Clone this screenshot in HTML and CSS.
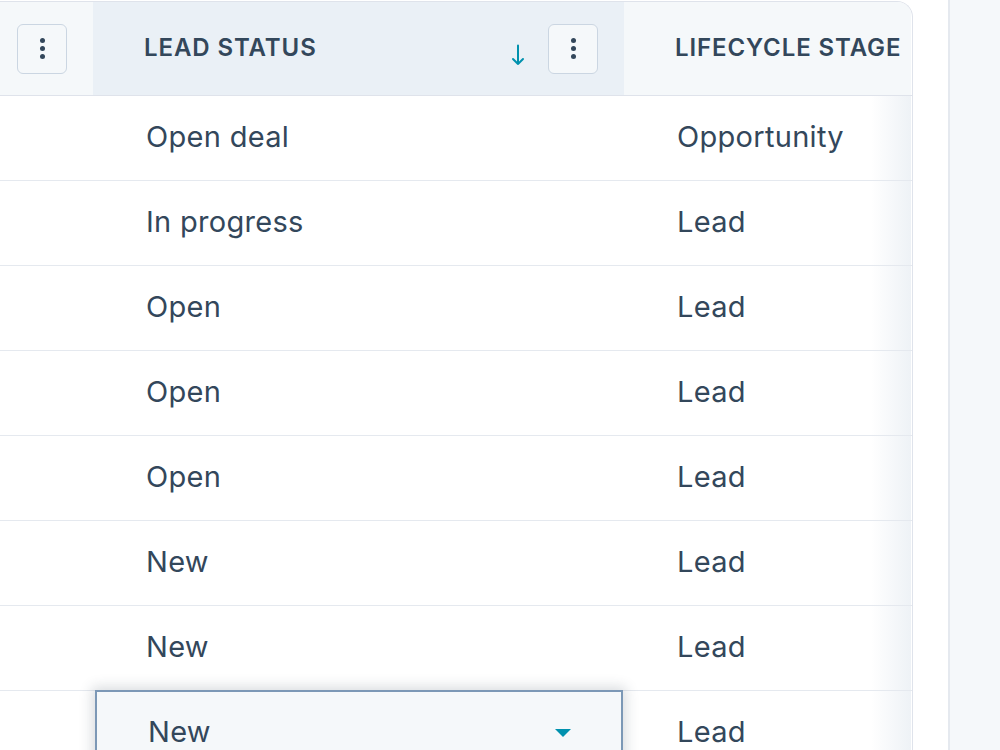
FILE: index.html
```html
<!DOCTYPE html>
<html lang="en">
<head>
    <meta charset="UTF-8">
    <title>Contacts</title>
    <link rel="stylesheet" href="styles.css">
</head>
<body>
    <div class="page">
        <div class="table">
            <div class="row head">
                <div class="cell col-a">
                    <button class="menu-btn"><span></span><span></span><span></span></button>
                </div>
                <div class="cell col-b sorted">
                    <span class="title">LEAD STATUS</span>
                    <svg class="sort" width="14" height="22" viewBox="0 0 14 22">
                        <path d="M7 1.5 V20 M2 15 L7 20 L12 15" fill="none" stroke="#0091ae" stroke-width="2" stroke-linecap="round" stroke-linejoin="round"/>
                    </svg>
                    <button class="menu-btn"><span></span><span></span><span></span></button>
                </div>
                <div class="cell col-c">
                    <span class="title">LIFECYCLE STAGE</span>
                </div>
            </div>
            <div class="row">
                <div class="cell col-a"></div>
                <div class="cell col-b">Open deal</div>
                <div class="cell col-c">Opportunity</div>
            </div>
            <div class="row">
                <div class="cell col-a"></div>
                <div class="cell col-b">In progress</div>
                <div class="cell col-c">Lead</div>
            </div>
            <div class="row">
                <div class="cell col-a"></div>
                <div class="cell col-b">Open</div>
                <div class="cell col-c">Lead</div>
            </div>
            <div class="row">
                <div class="cell col-a"></div>
                <div class="cell col-b">Open</div>
                <div class="cell col-c">Lead</div>
            </div>
            <div class="row">
                <div class="cell col-a"></div>
                <div class="cell col-b">Open</div>
                <div class="cell col-c">Lead</div>
            </div>
            <div class="row">
                <div class="cell col-a"></div>
                <div class="cell col-b">New</div>
                <div class="cell col-c">Lead</div>
            </div>
            <div class="row">
                <div class="cell col-a"></div>
                <div class="cell col-b">New</div>
                <div class="cell col-c">Lead</div>
            </div>
            <div class="row">
                <div class="cell col-a"></div>
                <div class="cell col-b editing">
                    <span>New</span>
                    <span class="caret"></span>
                </div>
                <div class="cell col-c">Lead</div>
            </div>
        </div>
        <div class="side-panel"></div>
    </div>
</body>
</html>
```

FILE: styles.css
```css
body {
    margin: 0;
    font-family: Inter, "Open Sans", sans-serif;
    color: #33475b;
    background: #fff;
    overflow: hidden;
}
.page {
    display: flex;
    height: 750px;
    padding-top: 1px;
    box-sizing: border-box;
}
.table {
    width: 913px;
    border-top: 1px solid #dfe3eb;
    border-right: 1px solid #dfe3eb;
    border-top-right-radius: 16px;
    box-sizing: border-box;
    overflow: hidden;
    flex-shrink: 0;
}
.row {
    display: flex;
    height: 85px;
    border-bottom: 1px solid #e5e9ef;
    box-sizing: border-box;
}
.row.head {
    height: 94px;
    border-bottom: 1px solid #dfe3eb;
}
.cell {
    display: flex;
    align-items: center;
    box-sizing: border-box;
    font-size: 29px;
    letter-spacing: 0.3px;
    padding-left: 53px;
    padding-bottom: 3px;
}
.col-a {
    width: 93px;
    justify-content: flex-end;
    padding: 0 26px 0 0;
}
.col-b {
    width: 531px;
}
.col-c {
    width: 287px;
    background: linear-gradient(to right, #fff 86%, #eef2f6);
}
.head .cell {
    background: #f5f8fa;
    padding-bottom: 0;
}
.head .col-b,
.head .col-c {
    padding-left: 51px;
}
.head .sorted {
    background: #eaf0f6;
    padding-right: 26px;
}
.title {
    font-size: 24px;
    font-weight: 600;
    letter-spacing: 0.9px;
    padding-bottom: 3px;
}
.sort {
    margin-left: auto;
    margin-right: 23px;
    margin-top: 13px;
}
.menu-btn {
    width: 50px;
    height: 50px;
    border: 1px solid #cbd6e2;
    border-radius: 6px;
    background: #f5f8fa;
    display: flex;
    flex-direction: column;
    align-items: center;
    justify-content: center;
    gap: 3px;
    padding: 0;
}
.menu-btn span {
    width: 5px;
    height: 5px;
    border-radius: 50%;
    background: #33475b;
}
.editing {
    position: relative;
    z-index: 1;
    margin: -1px 1px 0 2px;
    width: 528px;
    height: 86px;
    padding-left: 51px;
    padding-right: 50px;
    padding-bottom: 4px;
    justify-content: space-between;
    background: #f5f8fa;
    border: 2px solid #7c98b6;
    box-shadow: 0 0 12px 3px rgba(45, 62, 80, 0.18);
}
.caret {
    width: 0;
    height: 0;
    margin-top: 4px;
    border-left: 8px solid transparent;
    border-right: 8px solid transparent;
    border-top: 8px solid #0091ae;
}
.side-panel {
    margin-left: 35px;
    flex: 1;
    margin-top: -1px;
    border-left: 2px solid #e5e9ef;
    background: #f5f8fa;
}
```
